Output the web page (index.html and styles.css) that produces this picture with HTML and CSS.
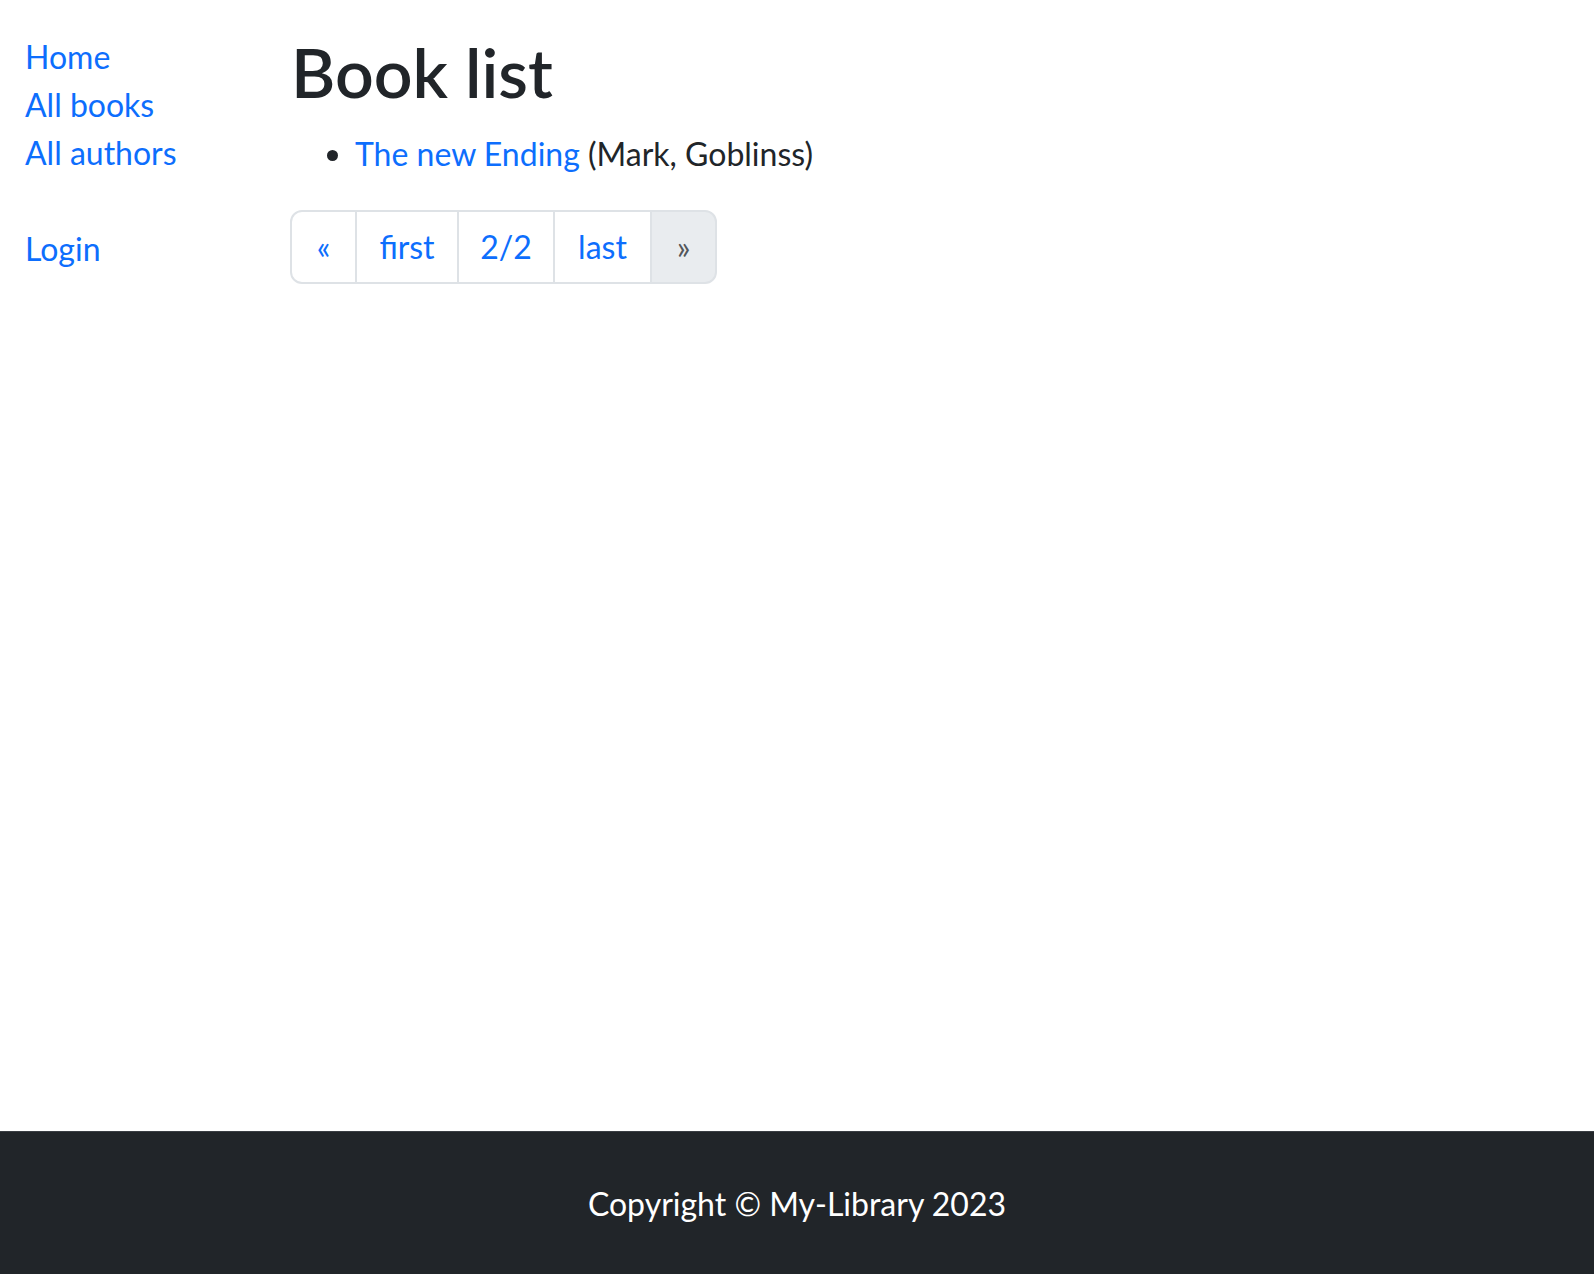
FILE: index.html
```html
<!DOCTYPE html>
<html lang="en">
<head>
<meta charset="utf-8">
<title>Local Library</title>
<link rel="stylesheet" href="styles.css">
</head>
<body>
<div class="page">
  <aside class="sidebar">
    <ul class="sidebar-nav">
      <li><a href="#">Home</a></li>
      <li><a href="#">All books</a></li>
      <li><a href="#">All authors</a></li>
      <li class="login"><a href="#">Login</a></li>
    </ul>
  </aside>
  <main class="content">
    <h1 class="title">Book list</h1>
    <ul class="book-list">
      <li><a href="#">The new Ending</a> (Mark, Goblinss)</li>
    </ul>
    <nav class="pagination">
      <a class="page-link page-prev" href="#">&laquo;</a>
      <a class="page-link page-first" href="#">first</a>
      <a class="page-link page-current" href="#">2/2</a>
      <a class="page-link page-last" href="#">last</a>
      <span class="page-link page-next disabled">&raquo;</span>
    </nav>
  </main>
</div>
<footer class="footer">
  <p class="footer-text">Copyright &copy; My-Library 2023</p>
</footer>
</body>
</html>
```

FILE: styles.css
```css
* { box-sizing: border-box; }

html, body { height: 100%; }

body {
  margin: 0;
  min-height: 100vh;
  display: flex;
  flex-direction: column;
  font-family: "Lato", "Open Sans", sans-serif;
  font-size: 32px;
  line-height: 48px;
  color: #212529;
  background: #fff;
}

a {
  color: #0d6efd;
  text-decoration: none;
}

.page {
  flex: 1;
  display: flex;
  padding-top: 31px;
}

.sidebar {
  width: 290px;
  flex: 0 0 290px;
  padding-left: 25px;
  padding-top: 2px;
}

.sidebar-nav {
  list-style: none;
  margin: 0;
  padding: 0;
}

.sidebar-nav .login {
  margin-top: 48px;
}

.content {
  flex: 1;
}

.title {
  margin: 0 0 17px 1px;
  font-size: 68px;
  line-height: 81.6px;
  font-weight: 600;
}

.book-list {
  margin: 0 0 32px;
  padding-left: 65px;
}

.pagination {
  display: flex;
}

.page-link {
  display: block;
  padding: 11px 0;
  text-align: center;
  border: 2px solid #dee2e6;
  margin-left: -2px;
  background: #fff;
  color: #0d6efd;
}

.page-prev {
  width: 67px;
  margin-left: 0;
  border-radius: 12px 0 0 12px;
}

.page-first { width: 104px; }
.page-current { width: 98px; }
.page-last { width: 99px; }

.page-next {
  width: 67px;
  border-radius: 0 12px 12px 0;
}

.disabled {
  background: #e9ecef;
  color: rgba(33, 37, 41, 0.75);
}

.footer {
  background: #212529;
  border-top: 1px solid #3a3e43;
  padding: 48px 0 46px;
  color: #fff;
  text-align: center;
}

.footer-text {
  margin: 0;
}
```
